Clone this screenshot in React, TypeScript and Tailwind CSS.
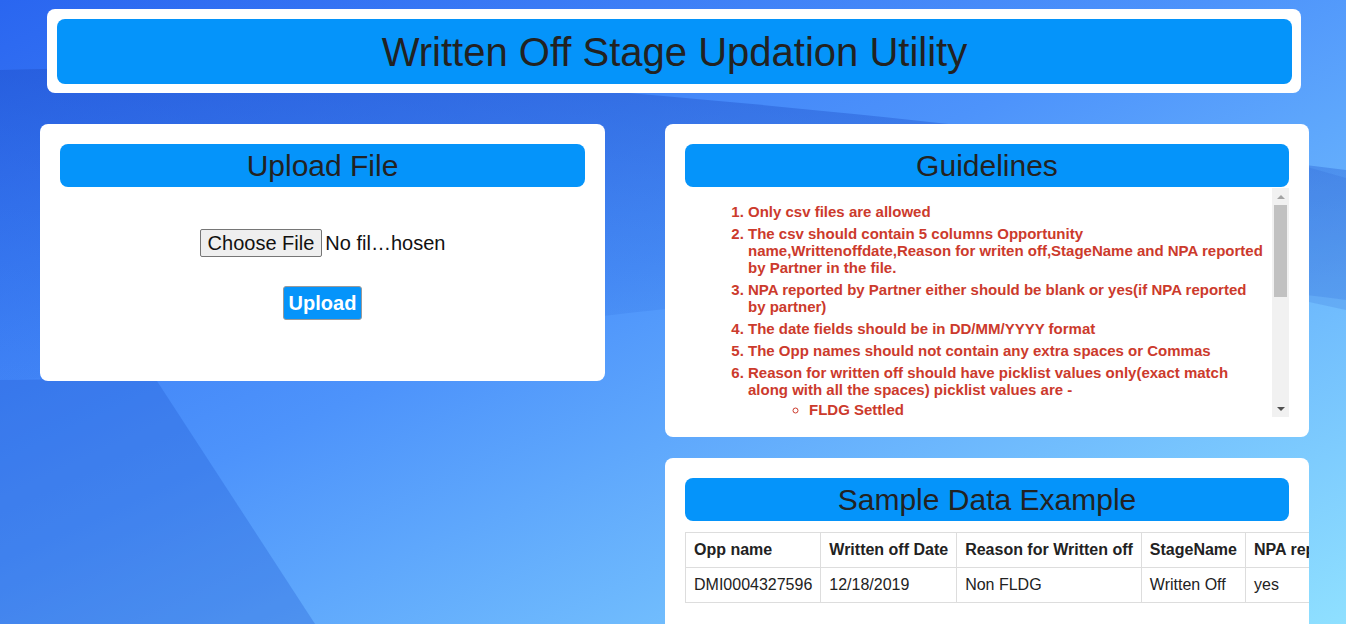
import React from 'react';

const guidelines: { text: string; sub?: string[] }[] = [
  { text: 'Only csv files are allowed' },
  {
    text: 'The csv should contain 5 columns Opportunity name,Writtenoffdate,Reason for writen off,StageName and NPA reported by Partner in the file.',
  },
  { text: 'NPA reported by Partner either should be blank or yes(if NPA reported by partner)' },
  { text: 'The date fields should be in DD/MM/YYYY format' },
  { text: 'The Opp names should not contain any extra spaces or Commas' },
  {
    text: 'Reason for written off should have picklist values only(exact match along with all the spaces) picklist values are -',
    sub: ['FLDG Settled'],
  },
];

const headers = ['Opp name', 'Written off Date', 'Reason for Written off', 'StageName', 'NPA reported by Partner'];
const row = ['DMI0004327596', '12/18/2019', 'Non FLDG', 'Written Off', 'yes'];

function Wallpaper() {
  return (
    <svg className="absolute inset-0 w-full h-full" viewBox="0 0 1346 624" preserveAspectRatio="none">
      <defs>
        <linearGradient id="bg" x1="0" y1="0" x2="1" y2="1">
          <stop offset="0" stopColor="#2a66f0" />
          <stop offset="0.45" stopColor="#4d93fb" />
          <stop offset="1" stopColor="#8fe0ff" />
        </linearGradient>
        <linearGradient id="dark" x1="0" y1="0" x2="0" y2="1">
          <stop offset="0" stopColor="#1f4fc8" stopOpacity="0.45" />
          <stop offset="1" stopColor="#2a6ee0" stopOpacity="0.1" />
        </linearGradient>
      </defs>
      <rect width="1346" height="624" fill="url(#bg)" />
      <path d="M0 70 C 300 60, 700 90, 1346 170 L1346 300 C 900 240, 400 360, 0 380 Z" fill="url(#dark)" />
      <path d="M0 380 L155 378 L315 624 L0 624 Z" fill="#2158d0" fillOpacity="0.3" />
      <path d="M1300 165 L1346 178 L1346 310 L1300 300 Z" fill="#1f4fc8" fillOpacity="0.15" />
    </svg>
  );
}

function BarTitle({ children }: { children: React.ReactNode }) {
  return (
    <div className="h-[43px] bg-[#0594fa] rounded-lg flex items-center justify-center text-[30px] text-[#222]">
      {children}
    </div>
  );
}

export default function App() {
  return (
    <div className="relative w-[1346px] h-[624px] overflow-hidden font-['Liberation_Sans',Arial,sans-serif]">
      <Wallpaper />
      <div className="relative">
        {/* Header */}
        <div className="ml-[47px] mt-[9px] w-[1254px] bg-white rounded-lg pt-[10px] pb-[9px] pl-[10px] pr-[9px]">
          <div className="h-[65px] bg-[#0594fa] rounded-lg flex items-center justify-center text-[40px] text-[#222]">
            Written Off Stage Updation Utility
          </div>
        </div>

        <div className="flex items-start gap-[60px] pl-[40px] mt-[31px]">
          {/* Upload */}
          <div className="w-[565px] h-[257px] bg-white rounded-lg p-[20px]">
            <BarTitle>Upload File</BarTitle>
            <div className="flex flex-col items-center">
              <div className="mt-[42px] flex items-center h-[28px] text-[20px] text-[#111]">
                <span className="h-[28px] px-[7px] flex items-center bg-[#efefef] border border-[#767676] rounded-[2px]">
                  Choose File
                </span>
                <span className="ml-[3px]">No fil…hosen</span>
              </div>
              <button className="mt-[29px] h-[34px] w-[79px] bg-[#0594fa] border border-[#9a9a9a] rounded-[3px] text-white font-bold text-[20px]">
                Upload
              </button>
            </div>
          </div>

          <div className="flex flex-col gap-[21px]">
            {/* Guidelines */}
            <div className="w-[644px] bg-white rounded-lg p-[20px] pb-[20px]">
              <BarTitle>Guidelines</BarTitle>
              <div className="mt-px h-[229px] flex overflow-hidden">
                <div className="flex-1 overflow-hidden">
                  <ol className="list-decimal pl-[63px] pr-[7px] pt-[15px] text-[15px] leading-[17px] font-bold text-[#cc3a2c]">
                    {guidelines.map((g) => (
                      <li key={g.text} className="mb-[5px]">
                        {g.text}
                        {g.sub && (
                          <ul className="list-[circle] pl-[61px] mt-[3px]">
                            {g.sub.map((s) => (
                              <li key={s}>{s}</li>
                            ))}
                          </ul>
                        )}
                      </li>
                    ))}
                  </ol>
                </div>
                {/* scrollbar */}
                <div className="w-[17px] bg-[#f1f1f1] flex flex-col items-center">
                  <div className="h-[17px] flex items-center justify-center">
                    <div className="w-0 h-0 border-l-[4px] border-r-[4px] border-b-[4px] border-l-transparent border-r-transparent border-b-[#a3a3a3]" />
                  </div>
                  <div className="w-[13px] h-[92px] bg-[#c1c1c1]" />
                  <div className="flex-1" />
                  <div className="h-[17px] flex items-center justify-center">
                    <div className="w-0 h-0 border-l-[4px] border-r-[4px] border-t-[4px] border-l-transparent border-r-transparent border-t-[#505050]" />
                  </div>
                </div>
              </div>
            </div>

            {/* Sample data */}
            <div className="w-[644px] h-[200px] bg-white rounded-lg p-[20px] overflow-hidden">
              <BarTitle>Sample Data Example</BarTitle>
              <table className="mt-[11px] border-collapse text-[16px] text-[#222] whitespace-nowrap">
                <thead>
                  <tr>
                    {headers.map((h) => (
                      <th key={h} className="border border-[#dddddd] h-[35px] px-[8px] text-left font-bold">
                        {h}
                      </th>
                    ))}
                  </tr>
                </thead>
                <tbody>
                  <tr>
                    {row.map((c) => (
                      <td key={c} className="border border-[#dddddd] h-[35px] px-[8px]">
                        {c}
                      </td>
                    ))}
                  </tr>
                </tbody>
              </table>
            </div>
          </div>
        </div>
      </div>
    </div>
  );
}
